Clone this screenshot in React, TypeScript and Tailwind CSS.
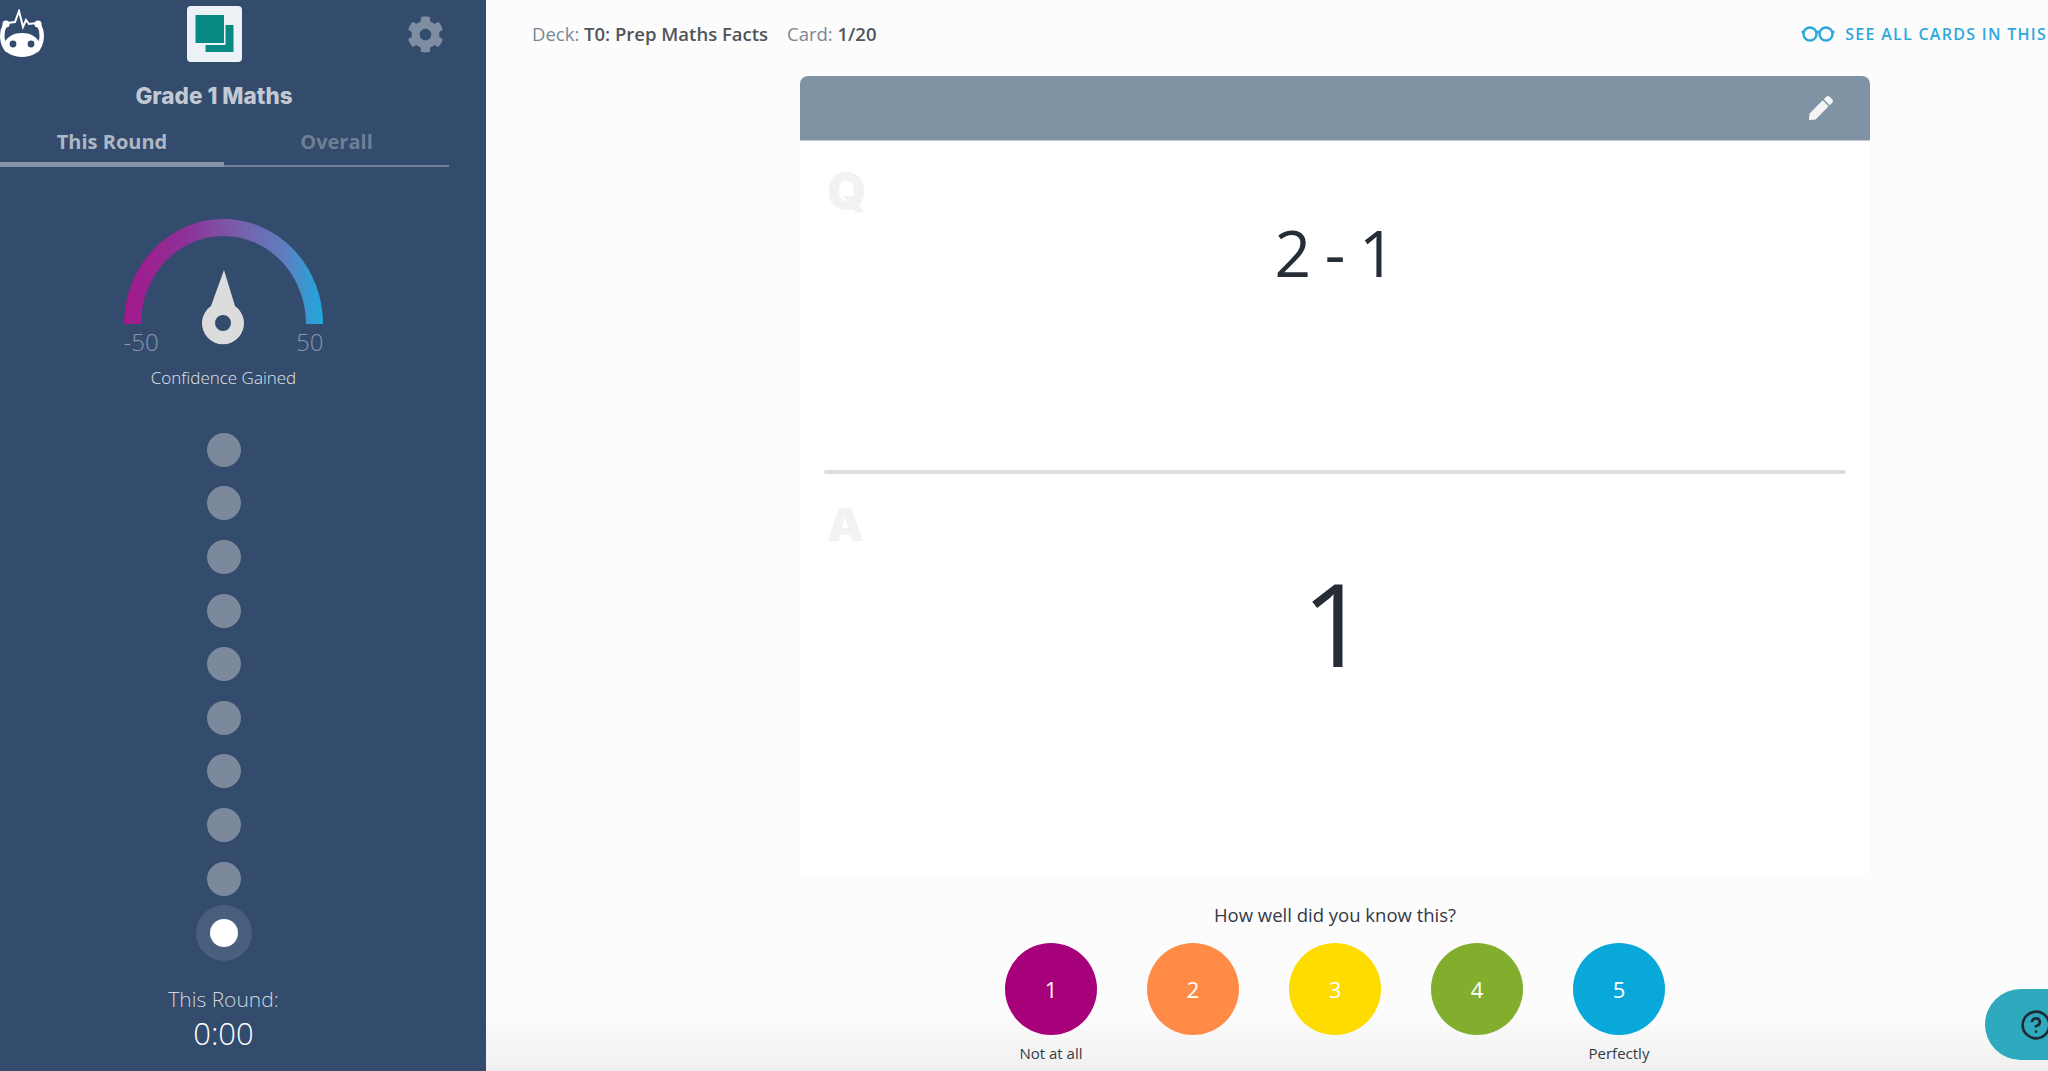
import React from "react";
import { FaCog, FaPen } from "react-icons/fa";
import { CircleHelp } from "lucide-react";

const ratings = [
  { n: 1, color: "bg-[#a6007a]", label: "Not at all" },
  { n: 2, color: "bg-[#ff8b47]", label: "" },
  { n: 3, color: "bg-[#ffdc00]", label: "" },
  { n: 4, color: "bg-[#82ae2e]", label: "" },
  { n: 5, color: "bg-[#08a9da]", label: "Perfectly" },
];

function Logo() {
  return (
    <svg width="44" height="50" viewBox="0 9 44 50" className="shrink-0">
      <circle cx="6" cy="24" r="3.6" fill="#fff" />
      <circle cx="38" cy="24" r="3.6" fill="#fff" />
      <path d="M7 23 L15 22 L19 11 L23 27 L26 20 L29 24 L37 23" fill="none" stroke="#fff" strokeWidth="2" />
      <path d="M5 25 C1 32 1 44 8 51 M39 25 C43 32 43 44 36 51" fill="none" stroke="#fff" strokeWidth="4.5" />
      <path d="M3 44 C8 36 14 33 22 33 C30 33 36 36 41 44 C41 52 32 57 22 57 C12 57 3 52 3 44 Z" fill="#fff" />
      <circle cx="13" cy="44" r="3.4" fill="#334b6c" />
      <circle cx="31" cy="44" r="3.4" fill="#334b6c" />
    </svg>
  );
}

function Gauge() {
  return (
    <svg width="210" height="130" viewBox="120 215 210 130" className="block ml-[2px]">
      <defs>
        <linearGradient id="gauge" gradientUnits="userSpaceOnUse" x1="124" y1="0" x2="323" y2="0">
          <stop offset="0" stopColor="#a3198c" />
          <stop offset="0.3" stopColor="#8f2f97" />
          <stop offset="0.55" stopColor="#7a5ba8" />
          <stop offset="0.8" stopColor="#5f7dbf" />
          <stop offset="1" stopColor="#1fa9dd" />
        </linearGradient>
      </defs>
      <path d="M132.5 324 A91 96.5 0 0 1 314.5 324" fill="none" stroke="url(#gauge)" strokeWidth="17" />
      <path
        fillRule="evenodd"
        fill="#dcdcdc"
        d="M224 270 L235 306 A21 21 0 1 1 211 306 Z M223 315 A8 8 0 1 0 223 331 A8 8 0 1 0 223 315 Z"
      />
    </svg>
  );
}

function Glasses() {
  return (
    <svg width="34" height="18" viewBox="0 0 34 18" fill="none" stroke="#2ea8dc" strokeWidth="2.4">
      <circle cx="9" cy="9" r="6.5" />
      <circle cx="25" cy="9" r="6.5" />
      <path d="M15 7.5 C16 6.5 18 6.5 19 7.5 M2.5 8 L1 6 M31.5 8 L33 6" />
    </svg>
  );
}

function Sidebar() {
  return (
    <aside className="w-[486px] shrink-0 h-full bg-[#334b6c] flex flex-col">
      <div className="flex items-center pt-[6px]">
        <Logo />
        <div className="ml-[143px] w-[55px] h-[56px] rounded-[4px] bg-[#edf2f7] flex items-center justify-center shrink-0">
          <svg width="40" height="40" viewBox="0 0 40 40">
            <path d="M30.5 11 H38.5 V38 H10.5 V31 H30.5 Z" fill="#088a84" />
            <rect x="0.5" y="1" width="28.5" height="28" fill="#088a84" />
          </svg>
        </div>
        <FaCog className="ml-[165px] text-[#7f8da3] text-[37px]" />
      </div>
      <div className="w-[428px] mt-[20px] text-center text-[22.5px] leading-[28px] font-extrabold text-[#c3c9d2] font-['Inter',sans-serif]">
        Grade 1 Maths
      </div>
      <div className="w-[449px] mt-[18px] flex items-end font-['Open_Sans',sans-serif] font-bold text-[20px] leading-[28px]">
        <div className="w-[224px] pb-[6px] text-center border-b-[5px] border-[#8595a9] text-[#aeb7c4]">
          This Round
        </div>
        <div className="flex-1 pb-[9px] text-center border-b-[2px] border-[#6f8098] text-[#6f7f96]">
          Overall
        </div>
      </div>
      <div className="w-[447px] mt-[48px] flex flex-col items-center">
        <Gauge />
        <div className="w-[200px] -mt-[19px] flex justify-between text-[24px] leading-[32px] font-light text-[#8a97ab] font-['Open_Sans',sans-serif]">
          <span>-50</span>
          <span>50</span>
        </div>
        <div className="mt-[8px] text-[17px] leading-[24px] font-light text-[#e0e4e9] font-['Open_Sans',sans-serif]">
          Confidence Gained
        </div>
      </div>
      <div className="w-[447px] mt-[33px] flex flex-col items-center">
        {Array.from({ length: 9 }).map((_, i) => (
          <div key={i} className="h-[53.6px] flex items-center">
            <div className="w-[34px] h-[34px] rounded-full bg-[#7c889c]" />
          </div>
        ))}
        <div className="w-[56px] h-[56px] rounded-full bg-[#4a5f7e] flex items-center justify-center">
          <div className="w-[28px] h-[28px] rounded-full bg-white" />
        </div>
      </div>
      <div className="w-[447px] mt-[23px] flex flex-col items-center font-light font-['Open_Sans',sans-serif]">
        <div className="text-[21px] leading-[30px] text-[#d0d5dc]">This Round:</div>
        <div className="text-[31px] leading-[38px] text-white">0:00</div>
      </div>
    </aside>
  );
}

function Card() {
  return (
    <div className="w-[1070px] h-[801px] mx-auto rounded-[8px] bg-white flex flex-col overflow-hidden font-['Open_Sans',sans-serif]">
      <div className="h-[65px] shrink-0 bg-[#7f93a4] flex items-center justify-end pr-[37px] border-b border-[#c5ced8]">
        <FaPen className="text-[#f4f4f4] text-[24px] -mt-[1px]" />
      </div>
      <div className="relative h-[329px] shrink-0 flex justify-center pt-[64px]">
        <span className="absolute left-[27px] top-[22px] text-[50px] leading-[56px] font-black text-[#f2f2f2] font-['Inter',sans-serif]">
          Q
        </span>
        <span className="text-[64px] leading-[96px] text-[#262d36] [word-spacing:-3px]">2 - 1</span>
      </div>
      <div className="mx-[24px] h-[4px] rounded-full bg-[#dedede] shrink-0" />
      <div className="relative flex-1 flex justify-center pt-[68px]">
        <span className="absolute left-[27px] top-[22px] text-[46px] leading-[56px] font-black text-[#f2f2f2] font-['Inter',sans-serif]">
          A
        </span>
        <span className="text-[116px] leading-[160px] text-[#262d36]">1</span>
      </div>
    </div>
  );
}

function Rating() {
  return (
    <div className="flex-1 pt-[25px] flex flex-col items-center bg-linear-to-b from-[#fcfcfc] from-70% to-[#f0f0f0] font-['Open_Sans',sans-serif]">
      <div className="text-[18.5px] leading-[26px] text-[#333a45]">How well did you know this?</div>
      <div className="mt-[15px] flex gap-[50px]">
        {ratings.map((r) => (
          <div key={r.n} className="w-[92px] flex flex-col items-center">
            <div className={`w-[92px] h-[92px] rounded-full flex items-center justify-center text-[22px] text-white ${r.color}`}>
              {r.n}
            </div>
            <div className="mt-[7px] h-[22px] text-[15px] leading-[22px] text-[#333a45] whitespace-nowrap">{r.label}</div>
          </div>
        ))}
      </div>
    </div>
  );
}

export default function App() {
  return (
    <div className="relative w-[2048px] h-[1071px] overflow-hidden flex bg-[#fcfcfc]">
      <Sidebar />
      <main className="w-[1698px] shrink-0 h-full flex flex-col">
        <header className="h-[76px] shrink-0 pb-[8px] pl-[46px] pr-[137px] flex items-center justify-between font-['Open_Sans',sans-serif] text-[18.5px]">
          <div className="flex gap-[19px] text-[#7a8694]">
            <span>
              Deck: <b className="font-semibold text-[#50555c]">T0: Prep Maths Facts</b>
            </span>
            <span>
              Card: <b className="font-semibold text-[#50555c]">1/20</b>
            </span>
          </div>
          <div className="flex items-center gap-[10px] text-[16px] font-semibold tracking-[0.08em] text-[#2ea8dc] whitespace-nowrap">
            <Glasses />
            SEE ALL CARDS IN THIS
          </div>
        </header>
        <Card />
        <Rating />
      </main>
      <div className="absolute right-0 top-[989px] w-[63px] h-[71px] rounded-l-full bg-[#2fa9bd] flex items-center pl-[35px]">
        <CircleHelp size={32} strokeWidth={2} className="text-[#1f2a37] shrink-0" />
      </div>
    </div>
  );
}
